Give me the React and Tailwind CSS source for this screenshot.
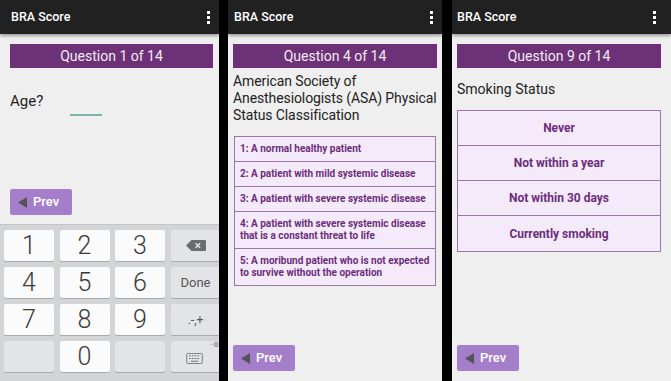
import React from "react";

const font = { fontFamily: "Roboto, 'Noto Sans', sans-serif" };

function Dots() {
  return (
    <div className="flex flex-col gap-[2px]">
      <span className="block w-[3px] h-[3px] bg-white" />
      <span className="block w-[3px] h-[3px] bg-white" />
      <span className="block w-[3px] h-[3px] bg-white" />
    </div>
  );
}

function AppBar({ pl, pr }) {
  return (
    <div
      className={`h-[34px] shrink-0 bg-[#212121] flex items-center justify-between shadow-[0_2px_3px_rgba(0,0,0,0.35)] relative z-10 ${pl} ${pr}`}
    >
      <span className="text-[12.5px] font-medium text-white">BRA Score</span>
      <Dots />
    </div>
  );
}

function QBar({ children }) {
  return (
    <div className="mt-[10px] h-[24px] bg-[#6d3178] flex items-center justify-center text-[14px] text-[#f3ecf4]">
      {children}
    </div>
  );
}

function Prev() {
  return (
    <div className="w-[62px] h-[26px] rounded-[2px] bg-[#a57ecb] flex items-center pl-[8px] gap-[6px]">
      <svg width="9" height="11" viewBox="0 0 9 11">
        <polygon points="9,0 9,11 0,5.5" fill="#555259" />
      </svg>
      <span className="text-[13px] font-medium text-white">Prev</span>
    </div>
  );
}

function Key({ children, fn, className = "" }) {
  return (
    <div
      className={`h-[31px] flex items-center justify-center rounded-[2px] shadow-[0_1px_0_#a9aaad] ${
        fn ? "bg-[#e3e4e6]" : "bg-[#fbfbfb]"
      } ${className}`}
    >
      {children}
    </div>
  );
}

function Keyboard() {
  const d = "text-[25px] leading-none text-[#3a3a3a] font-light";
  return (
    <div className="flex-1 bg-[#d3d4d6] border-t border-[#c4c5c7] pt-[5px] pl-[4px] grid grid-cols-[50px_50px_50px_50px] gap-x-[5.5px] gap-y-[6px] content-start overflow-hidden">
      <Key><span className={d}>1</span></Key>
      <Key><span className={d}>2</span></Key>
      <Key><span className={d}>3</span></Key>
      <Key fn>
        <svg width="20" height="11" viewBox="0 0 22 12">
          <path d="M6 0H21a1 1 0 0 1 1 1V11a1 1 0 0 1-1 1H6L0 6Z" fill="#6b6c6e" />
          <path d="M10.5 3.5l5 5M15.5 3.5l-5 5" stroke="#e3e4e6" strokeWidth="1.6" />
        </svg>
      </Key>
      <Key><span className={d}>4</span></Key>
      <Key><span className={d}>5</span></Key>
      <Key><span className={d}>6</span></Key>
      <Key fn><span className="text-[13px] text-[#555]">Done</span></Key>
      <Key><span className={d}>7</span></Key>
      <Key><span className={d}>8</span></Key>
      <Key><span className={d}>9</span></Key>
      <Key fn><span className="text-[12px] text-[#555]">.-,+</span></Key>
      <Key fn />
      <Key><span className={d}>0</span></Key>
      <Key fn />
      <Key fn className="relative">
        <svg width="17" height="11" viewBox="0 0 18 12" className="mt-[3px] -ml-[3px]">
          <rect x="0.5" y="0.5" width="17" height="11" rx="1" fill="none" stroke="#777" />
          <path d="M3 3h2M6 3h2M9 3h2M12 3h2M3 6h2M6 6h2M9 6h2M12 6h2M5 9h8" stroke="#777" strokeWidth="1.2" />
        </svg>
        <span className="absolute top-[1px] right-[1px] text-[7px] leading-none text-[#777]">··⚙</span>
      </Key>
    </div>
  );
}

function Screen1() {
  return (
    <div className="w-[219px] shrink-0 bg-[#efefef] flex flex-col">
      <AppBar pl="pl-[11px]" pr="pr-[9px]" />
      <div className="pl-[10px] pr-[6px]">
        <QBar>Question 1 of 14</QBar>
        <div className="flex items-start mt-[24px]">
          <span className="text-[15px] leading-[18px] text-[#222]">Age?</span>
          <div className="ml-[27px] mt-[22px] w-[32px] h-[2px] bg-[#80b4aa]" />
        </div>
        <div className="mt-[73px] mb-[9px]">
          <Prev />
        </div>
      </div>
      <Keyboard />
    </div>
  );
}

function Screen2() {
  const opts = [
    ["1: A normal healthy patient"],
    ["2: A patient with mild systemic disease"],
    ["3: A patient with severe systemic disease"],
    ["4: A patient with severe systemic disease", "that is a constant threat to life"],
    ["5: A moribund patient who is not expected", "to survive without the operation"],
  ];
  return (
    <div className="w-[214px] shrink-0 bg-[#efefef] flex flex-col">
      <AppBar pl="pl-[6px]" pr="pr-[9px]" />
      <div className="px-[5px] flex-1 flex flex-col">
        <QBar>Question 4 of 14</QBar>
        <div className="mt-[5px] text-[14px] leading-[17px] text-[#222] whitespace-nowrap tracking-[-0.1px]">
          <div>American Society of</div>
          <div>Anesthesiologists (ASA) Physical</div>
          <div>Status Classification</div>
        </div>
        <div className="mt-[12px] mx-[1px] border border-[#9c76aa] divide-y divide-[#9c76aa] bg-[#f5eafa]">
          {opts.map((o, i) => (
            <div key={i} className="px-[5px] py-[6px] text-[10px] leading-[12px] font-bold text-[#6b2d7a]">
              {o.map((l, j) => (
                <div key={j} className="whitespace-nowrap">{l}</div>
              ))}
            </div>
          ))}
        </div>
        <div className="mt-auto mb-[10px]">
          <Prev />
        </div>
      </div>
    </div>
  );
}

function Screen3() {
  const opts = ["Never", "Not within a year", "Not within 30 days", "Currently smoking"];
  return (
    <div className="flex-1 bg-[#efefef] flex flex-col">
      <AppBar pl="pl-[5px]" pr="pr-[15px]" />
      <div className="pl-[5px] pr-[10px] flex-1 flex flex-col">
        <QBar>Question 9 of 14</QBar>
        <div className="mt-[12px] text-[14px] leading-[18px] text-[#222]">Smoking Status</div>
        <div className="mt-[12px] border border-[#9c76aa] divide-y divide-[#9c76aa] bg-[#f5eafa]">
          {opts.map((o) => (
            <div key={o} className="h-[35px] flex items-center justify-center text-[12px] font-bold text-[#6b2d7a]">
              {o}
            </div>
          ))}
        </div>
        <div className="mt-auto mb-[10px]">
          <Prev />
        </div>
      </div>
    </div>
  );
}

export default function App() {
  return (
    <div className="w-[671px] h-[381px] bg-black flex overflow-hidden" style={font}>
      <Screen1 />
      <div className="w-[9px] shrink-0 bg-black" />
      <Screen2 />
      <div className="w-[10px] shrink-0 bg-black" />
      <Screen3 />
    </div>
  );
}
